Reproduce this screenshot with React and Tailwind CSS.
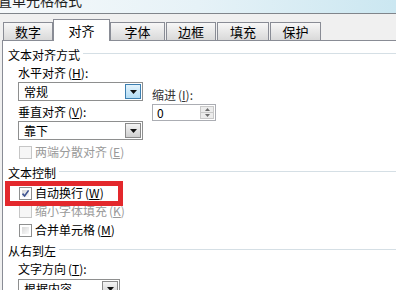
import React from 'react';

const tabs = [
  { label: '数字', cls: 'w-[50px]' },
  { label: '对齐', cls: 'w-[57px]', active: true },
  { label: '字体', cls: 'w-[55px]' },
  { label: '边框', cls: 'w-[50px] ml-px' },
  { label: '填充', cls: 'w-[52px] ml-px' },
  { label: '保护', cls: 'w-[51px] ml-px' },
];

function Key({ k }) {
  return (
    <span className="ml-[2px]">
      (<span className="underline underline-offset-1">{k}</span>)
    </span>
  );
}

function GroupHeader({ title, className }) {
  return (
    <div className={`flex items-center h-[14px] pl-[5px] ${className}`}>
      <span>{title}</span>
      <div className="ml-[3px] mb-[3px] h-px flex-1 bg-[#d5dfe5]" />
    </div>
  );
}

function DropArrow({ active }) {
  return (
    <div
      className={
        active
          ? 'mr-px h-[15px] w-[16px] flex items-center justify-center border border-[#3c7fb1] bg-gradient-to-b from-[#e3f3fc] to-[#b3dcf4]'
          : 'mr-px h-[15px] w-[16px] flex items-center justify-center border border-[#8a8a8a] bg-gradient-to-b from-[#f4f4f4] to-[#cfcfcf]'
      }
    >
      <svg width="7" height="4" viewBox="0 0 7 4">
        <path d="M0 0h7L3.5 4z" fill="#111" />
      </svg>
    </div>
  );
}

function Select({ value, className, active }) {
  return (
    <div className={`h-[19px] flex items-center border border-[#8e8f8f] bg-white ${className}`}>
      <span className="flex-1 pl-[5px]">{value}</span>
      <DropArrow active={active} />
    </div>
  );
}

function Checkbox({ checked, disabled }) {
  return (
    <div
      className={
        disabled
          ? 'w-[13px] h-[13px] border border-[#c6c6c6] bg-[#f6f6f6]'
          : 'w-[13px] h-[13px] border border-[#8e8f8f] bg-white p-[2px]'
      }
    >
      {!disabled && (
        <div className="relative w-full h-full bg-gradient-to-br from-[#d8d8d8] to-[#fbfbfb]">
          {checked && (
            <svg className="absolute -left-[1px] -top-[1px]" width="9" height="9" viewBox="0 0 9 9">
              <path d="M1.5 4.6 L3.6 7 L7.6 1.4" stroke="#3d5290" strokeWidth="1.6" fill="none" />
            </svg>
          )}
        </div>
      )}
    </div>
  );
}

function CheckRow({ children, checked, disabled, className }) {
  return (
    <div className={`flex items-center gap-[3px] h-[14px] pl-[16px] ${disabled ? 'text-[#9a9a9a]' : ''} ${className}`}>
      <Checkbox checked={checked} disabled={disabled} />
      <span>{children}</span>
    </div>
  );
}

export default function App() {
  return (
    <div className="relative w-[396px] h-[290px] overflow-hidden flex flex-col bg-[#f0f0f0] text-[12px] leading-[14px] text-black font-['Noto_Sans_CJK_SC',sans-serif]">
      {/* title bar */}
      <div className="h-[14px] shrink-0 overflow-hidden border-b border-[#80858b] bg-gradient-to-r from-[#f6f9fb] via-[#e6f2f7] to-[#cbe7f1]">
        <div className="-mt-[7px] -ml-[16px] text-[14px] leading-[14px] whitespace-nowrap text-[#222]">设置单元格格式</div>
      </div>

      {/* tabs */}
      <div className="h-[26px] shrink-0 flex items-end pl-[3px]">
        {tabs.map((t) =>
          t.active ? (
            <div
              key={t.label}
              className={`relative z-10 -mb-px h-[22px] flex items-center justify-center border border-b-0 border-[#898c95] bg-white text-[13px] ${t.cls}`}
            >
              {t.label}
            </div>
          ) : (
            <div
              key={t.label}
              className={`h-[18px] flex items-center justify-center border border-b-0 border-[#898c95] bg-gradient-to-b from-[#f7f7f7] to-[#d9d9d9] text-[13px] ${t.cls}`}
            >
              {t.label}
            </div>
          )
        )}
      </div>

      {/* panel */}
      <div className="flex-1 ml-[2px] border-t border-l border-[#898c95] bg-white pt-[7px]">
        <GroupHeader title="文本对齐方式" />

        <div className="flex pl-[15px]">
          <div className="w-[125px]">
            <div className="mt-[4px] h-[14px]">
              水平对齐<Key k="H" />:
            </div>
            <Select value="常规" active className="mt-[2px] w-[125px]" />
            <div className="mt-[4px] h-[14px]">
              垂直对齐<Key k="V" />:
            </div>
            <Select value="靠下" className="mt-[2px] w-[125px]" />
          </div>
          <div className="ml-[9px]">
            <div className="mt-[26px] h-[14px] text-[#333]">
              缩进<Key k="I" />:
            </div>
            <div className="mt-[2px] w-[64px] h-[17px] flex border border-[#abadb3] bg-white">
              <span className="flex-1 pl-[4px] leading-[15px]">0</span>
              <div className="w-[14px] my-px mr-px flex flex-col border border-[#c9c9c9] bg-[#ececec]">
                <div className="flex-1 flex items-center justify-center border-b border-[#c9c9c9]">
                  <svg width="5" height="3" viewBox="0 0 5 3">
                    <path d="M0 3h5L2.5 0z" fill="#6d6d6d" />
                  </svg>
                </div>
                <div className="flex-1 flex items-center justify-center">
                  <svg width="5" height="3" viewBox="0 0 5 3">
                    <path d="M0 0h5L2.5 3z" fill="#6d6d6d" />
                  </svg>
                </div>
              </div>
            </div>
          </div>
        </div>

        <CheckRow disabled className="mt-[5px]">
          两端分散对齐<Key k="E" />
        </CheckRow>

        <GroupHeader title="文本控制" className="mt-[7px]" />
        <CheckRow checked className="mt-[6px]">
          自动换行<Key k="W" />
        </CheckRow>
        <CheckRow disabled className="mt-[4px]">
          缩小字体填充<Key k="K" />
        </CheckRow>
        <CheckRow className="mt-[5px]">
          合并单元格<Key k="M" />
        </CheckRow>

        <GroupHeader title="从右到左" className="mt-[7px]" />
        <div className="pl-[15px]">
          <div className="mt-[4px] h-[14px]">
            文字方向<Key k="T" />:
          </div>
          <Select value="根据内容" className="mt-[3px] w-[102px]" />
        </div>
      </div>

      {/* red annotation */}
      <div className="absolute left-[5px] top-[181px] w-[118px] h-[25px] border-[5px] border-[#e3282c]" />
    </div>
  );
}
